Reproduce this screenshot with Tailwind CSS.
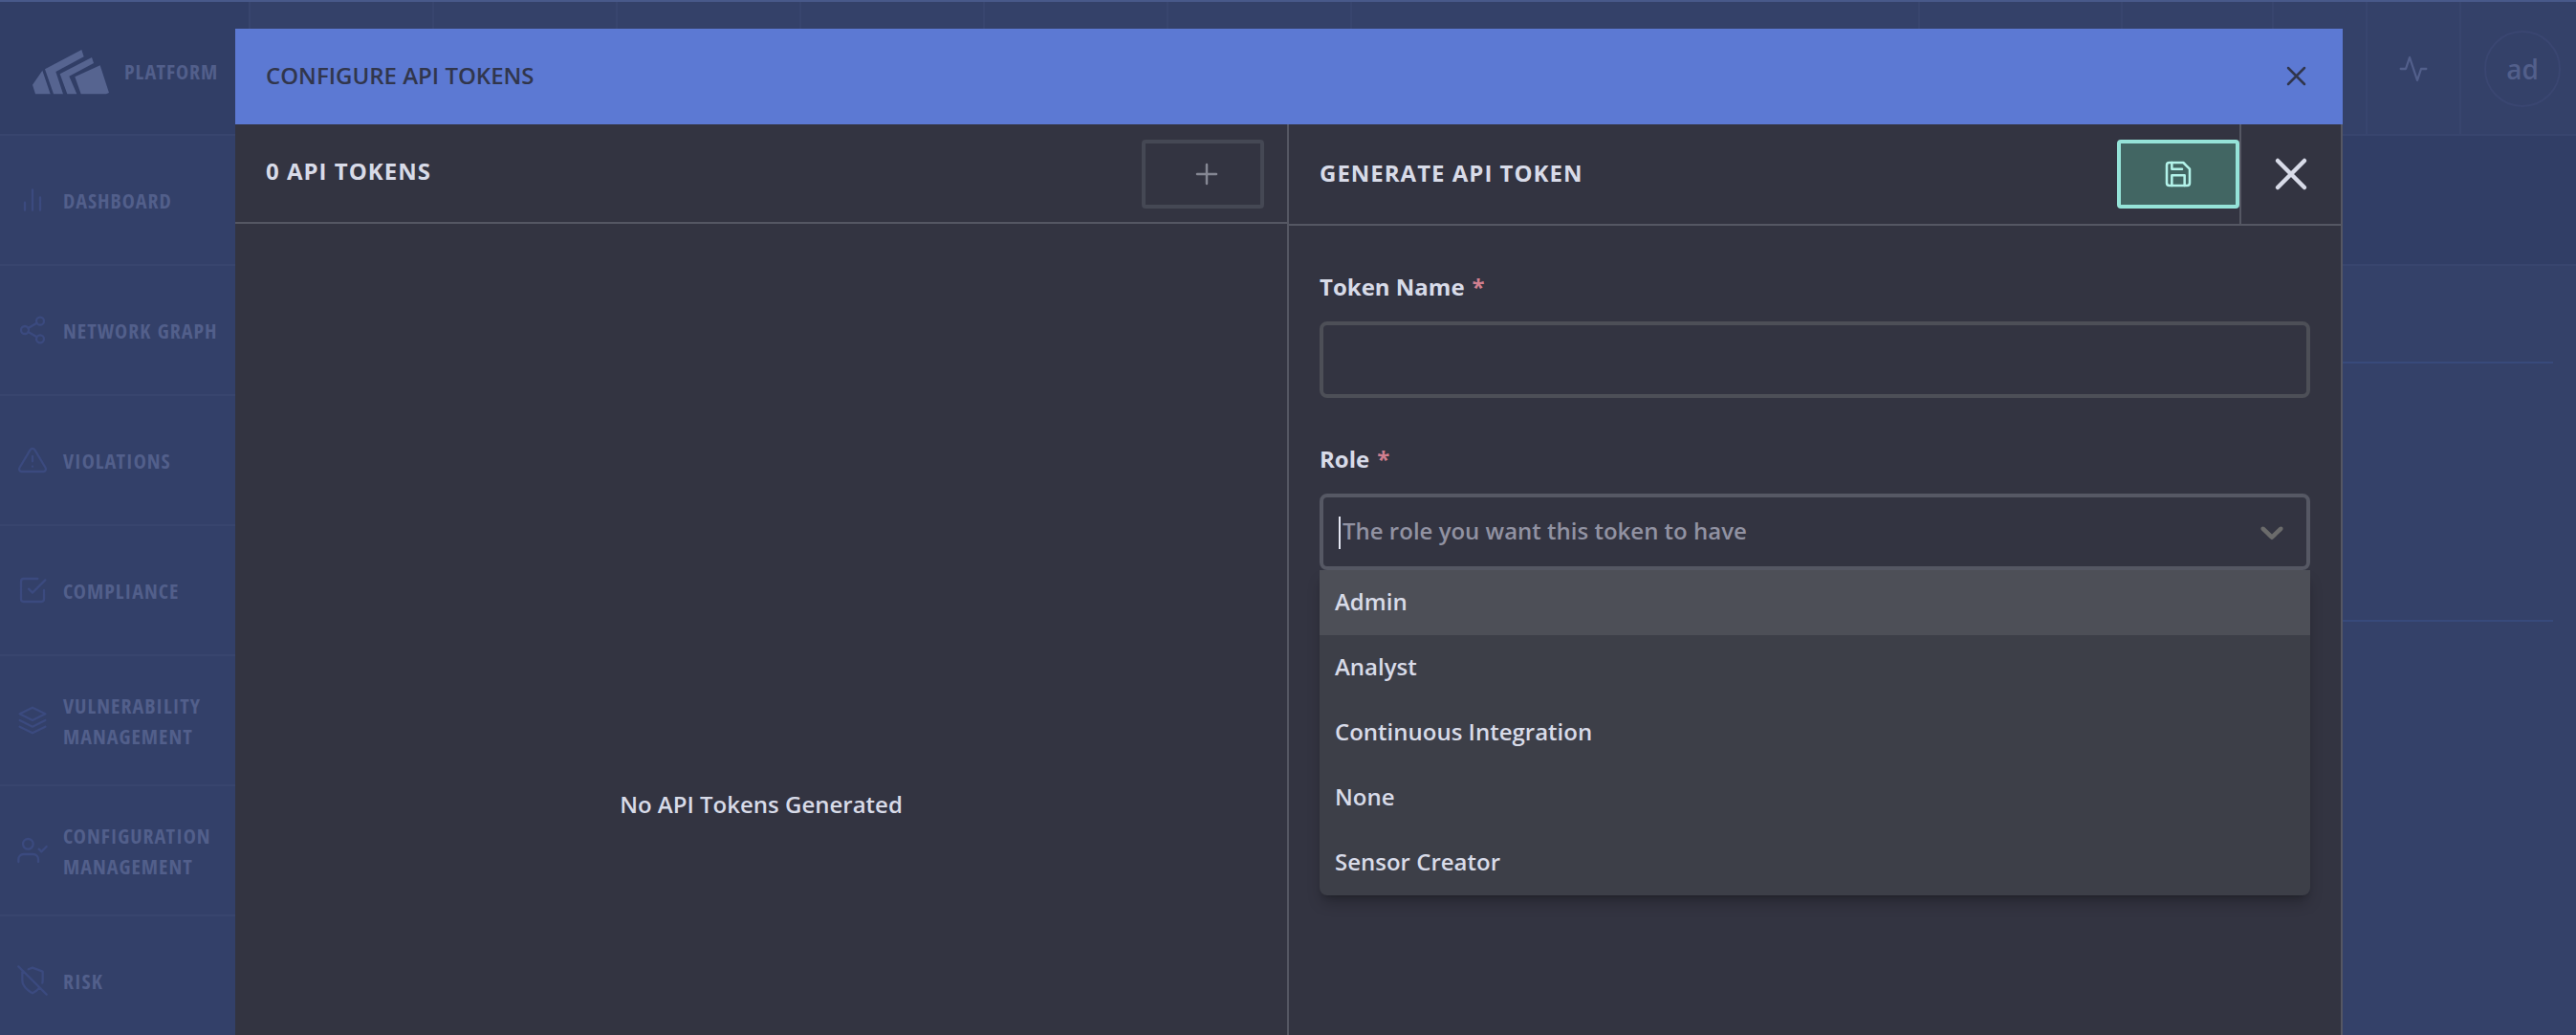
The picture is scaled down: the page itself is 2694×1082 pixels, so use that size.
<!DOCTYPE html>
<html lang="en">
<head>
<meta charset="utf-8">
<title>Configure API Tokens</title>
<script src="https://cdn.jsdelivr.net/npm/@tailwindcss/browser@4"></script>
</head>
<body class="relative h-screen overflow-hidden bg-[#344169] font-['Open_Sans',sans-serif] text-2xl font-semibold text-[#d8dbe8]">

<!-- Dimmed page behind the dialog -->
<div class="flex h-full flex-col border-t-2 border-[#48598a] text-[#525f8b]">
  <header class="flex h-[140px] shrink-0 border-b-2 border-[#38456e]">
    <a href="#" class="flex w-[262px] shrink-0 items-center gap-4 border-r-2 border-[#38456e] bg-[#313e66] pt-2 pl-[34px] font-['Open_Sans_Condensed','Liberation_Sans_Narrow',sans-serif] text-[22px] font-bold tracking-[1px]">
      <svg class="h-[47px] w-20 shrink-0 fill-[#566490]" viewBox="0 0 240 141" aria-hidden="true">
        <path d="M31 65 56 139H9L0 110ZM154 0l7 22L73 69l23 70H66L39 61ZM186 24l6 18L115 83l24 56h-30L86 76ZM212 49l28 86-9 4h-79l-19-54Z"/>
      </svg>
      PLATFORM
    </a>
    <div class="w-48 shrink-0 border-r-2 border-[#38456e]"></div>
    <div class="w-48 shrink-0 border-r-2 border-[#38456e]"></div>
    <div class="w-48 shrink-0 border-r-2 border-[#38456e]"></div>
    <div class="w-48 shrink-0 border-r-2 border-[#38456e]"></div>
    <div class="w-48 shrink-0 border-r-2 border-[#38456e]"></div>
    <div class="w-48 shrink-0 border-r-2 border-[#38456e]"></div>
    <div class="flex-1 border-r-2 border-[#38456e]"></div>
    <div class="w-[212px] border-r-2 border-[#38456e]"></div>
    <div class="w-[158px] border-r-2 border-[#38456e]"></div>
    <div class="w-[98px] border-r-2 border-[#38456e]"></div>
    <button type="button" aria-label="System health" class="flex w-[98px] items-center justify-center border-r-2 border-[#38456e] pt-0.5">
      <svg class="size-8" viewBox="0 0 24 24" fill="none" stroke="currentColor" stroke-width="1.7" stroke-linecap="round" stroke-linejoin="round"><path d="M22 12h-4l-3 9L9 3l-3 9H2"/></svg>
    </button>
    <div class="flex w-[120px] items-center justify-center pt-0.5 pl-2">
      <button type="button" class="size-20 rounded-full border-2 border-[#3a4671] text-[28px] leading-9">ad</button>
    </div>
  </header>

  <div class="flex min-h-0 flex-1">
    <nav class="w-[262px] shrink-0 border-r-2 border-[#38456e] bg-[#334069] font-['Open_Sans_Condensed','Liberation_Sans_Narrow',sans-serif] text-[22px] leading-8 font-bold tracking-[1px]">
      <a href="#" class="flex h-[136px] items-center gap-4 border-b-2 border-[#38456e] pl-[18px]">
        <svg class="size-8 shrink-0 text-[#3b4a7f]" viewBox="0 0 24 24" fill="none" stroke="currentColor" stroke-width="1.7" stroke-linecap="round" stroke-linejoin="round"><path d="M18 20V10M12 20V4M6 20v-6"/></svg>
        <span>DASHBOARD</span>
      </a>
      <a href="#" class="flex h-[136px] items-center gap-4 border-b-2 border-[#38456e] pl-[18px]">
        <svg class="size-8 shrink-0 text-[#3b4a7f]" viewBox="0 0 24 24" fill="none" stroke="currentColor" stroke-width="1.7" stroke-linecap="round" stroke-linejoin="round"><circle cx="18" cy="5" r="3"/><circle cx="6" cy="12" r="3"/><circle cx="18" cy="19" r="3"/><path d="m8.600 13.500 6.800 4M15.400 6.500l-6.800 4"/></svg>
        <span>NETWORK GRAPH</span>
      </a>
      <a href="#" class="flex h-[136px] items-center gap-4 border-b-2 border-[#38456e] pl-[18px]">
        <svg class="size-8 shrink-0 text-[#3b4a7f]" viewBox="0 0 24 24" fill="none" stroke="currentColor" stroke-width="1.7" stroke-linecap="round" stroke-linejoin="round"><path d="M10.300 3.900 1.800 18a2 2 0 0 0 1.700 3h17a2 2 0 0 0 1.700-3L13.700 3.900a2 2 0 0 0-3.400 0zM12 9v4M12 17h.01"/></svg>
        <span>VIOLATIONS</span>
      </a>
      <a href="#" class="flex h-[136px] items-center gap-4 border-b-2 border-[#38456e] pl-[18px]">
        <svg class="size-8 shrink-0 text-[#3b4a7f]" viewBox="0 0 24 24" fill="none" stroke="currentColor" stroke-width="1.7" stroke-linecap="round" stroke-linejoin="round"><path d="m9 11 3 3L22 4M21 12v7a2 2 0 0 1-2 2H5a2 2 0 0 1-2-2V5a2 2 0 0 1 2-2h11"/></svg>
        <span>COMPLIANCE</span>
      </a>
      <a href="#" class="flex h-[136px] items-center gap-4 border-b-2 border-[#38456e] pl-[18px]">
        <svg class="size-8 shrink-0 text-[#3b4a7f]" viewBox="0 0 24 24" fill="none" stroke="currentColor" stroke-width="1.7" stroke-linecap="round" stroke-linejoin="round"><path d="M12 2 2 7l10 5 10-5zM2 17l10 5 10-5M2 12l10 5 10-5"/></svg>
        <span>VULNERABILITY<br>MANAGEMENT</span>
      </a>
      <a href="#" class="flex h-[136px] items-center gap-4 border-b-2 border-[#38456e] pl-[18px]">
        <svg class="size-8 shrink-0 text-[#3b4a7f]" viewBox="0 0 24 24" fill="none" stroke="currentColor" stroke-width="1.7" stroke-linecap="round" stroke-linejoin="round"><path d="M16.500 21v-2a4 4 0 0 0-4-4H5a4 4 0 0 0-4 4v2M17 11l2 2 4-4"/><circle cx="8.500" cy="7" r="4"/></svg>
        <span>CONFIGURATION<br>MANAGEMENT</span>
      </a>
      <a href="#" class="flex h-[136px] items-center gap-4 border-b-2 border-[#38456e] pl-[18px]">
        <svg class="size-8 shrink-0 text-[#3b4a7f]" viewBox="0 0 24 24" fill="none" stroke="currentColor" stroke-width="1.7" stroke-linecap="round" stroke-linejoin="round"><path d="M19.700 14a6.900 6.900 0 0 0 .3-2V5l-8-3-3.200 1.200M4.700 4.700 4 5v7c0 6 8 10 8 10a20.300 20.300 0 0 0 5.600-4.400M1 1l22 22"/></svg>
        <span>RISK</span>
      </a>
    </nav>
    <main class="flex-1">
      <div class="h-[136px] border-b-2 border-[#38456e] bg-[#313e66]"></div>
      <div class="mr-6 h-[102px] border-b-2 border-[#384a7b]"></div>
      <div class="mr-6 h-[270px] border-b-2 border-[#384a7b]"></div>
    </main>
  </div>
</div>

<!-- Dialog -->
<section role="dialog" aria-modal="true" aria-labelledby="dialog-title" class="absolute top-[30px] right-[244px] bottom-0 left-[246px] flex flex-col bg-[#333441]">
  <header class="flex h-[100px] shrink-0 items-center justify-between bg-[#5c79d3] px-8 text-[#31364c]">
    <h1 id="dialog-title" class="pb-0.5">CONFIGURE API TOKENS</h1>
    <button type="button" aria-label="Close dialog">
      <svg class="size-8" viewBox="0 0 32 32" fill="none" stroke="currentColor" stroke-width="2.500" stroke-linecap="round"><path d="m7 7 17 17M24 7 7 24"/></svg>
    </button>
  </header>
  <div class="grid min-h-0 flex-1 grid-cols-2">
    <section class="flex flex-col border-r-2 border-[#555763]">
      <header class="flex h-[104px] shrink-0 justify-between border-b-2 border-[#555763] pt-4 pr-6 pl-8">
        <h2 class="leading-[66px] font-bold tracking-[1px]">0 API TOKENS</h2>
        <button type="button" aria-label="Generate token" class="flex h-[72px] w-32 items-center justify-center rounded-sm border-4 border-[#454854] pl-2 text-[#858793]">
          <svg class="size-8" viewBox="0 0 32 32" fill="none" stroke="currentColor" stroke-width="2.500" stroke-linecap="round"><path d="M16 6v20M6 16h20"/></svg>
        </button>
      </header>
      <p class="flex flex-1 items-center justify-center pt-[366px]">No API Tokens Generated</p>
    </section>
    <section class="border-r-2 border-[#555763]">
      <header class="flex h-[106px] border-b-2 border-[#555763] pl-8">
        <h2 class="flex-1 leading-[102px] font-bold tracking-[1px]">GENERATE API TOKEN</h2>
        <div class="flex items-center border-r-2 border-[#555763]">
          <button type="submit" form="token-form" aria-label="Save" class="flex h-[72px] w-32 items-center justify-center rounded-sm border-4 border-[#95e3d8] bg-[#426663] text-[#b3f3ea]">
            <svg class="size-8" viewBox="0 0 24 24" fill="none" stroke="currentColor" stroke-width="1.900" stroke-linecap="round" stroke-linejoin="round"><path d="M19 21H5a2 2 0 0 1-2-2V5a2 2 0 0 1 2-2h11l5 5v11a2 2 0 0 1-2 2z"/><path d="M17 21v-8H7v8M7 3v5h8"/></svg>
          </button>
        </div>
        <button type="button" aria-label="Close panel" class="flex w-[104px] items-center justify-center">
          <svg class="size-10" viewBox="0 0 40 40" fill="none" stroke="currentColor" stroke-width="4.500" stroke-linecap="round"><path d="m6 6 28 28M34 6 6 34"/></svg>
        </button>
      </header>
      <form id="token-form" class="px-8 pt-[46px]">
        <label for="token-name" class="flex gap-2 leading-9 font-bold">Token Name <span class="text-[#d07f8f]" aria-hidden="true">*</span></label>
        <input id="token-name" type="text" class="mt-[18px] block h-20 w-full rounded-lg border-4 border-[#4d4f57] px-4 outline-none">
        <label for="token-role" class="mt-[46px] flex gap-2 leading-9 font-bold">Role <span class="text-[#d07f8f]" aria-hidden="true">*</span></label>
        <div class="relative mt-[18px]">
          <input id="token-role" type="text" role="combobox" aria-expanded="true" aria-controls="role-options" placeholder="The role you want this token to have" class="block h-20 w-full rounded-lg border-4 border-[#565864] pr-16 pb-1 pl-5 outline-none placeholder:text-[#9192a2]">
          <span class="absolute top-6 left-5 h-[34px] w-0.5 bg-[#e4e6f2]"></span>
          <svg class="absolute top-5 right-5 size-10 text-[#6b6b6b]" viewBox="0 0 20 20" fill="currentColor" aria-hidden="true"><path d="M4.516 7.548c.436-.446 1.043-.481 1.576 0L10 11.295l3.908-3.747c.533-.481 1.141-.446 1.574 0 .436.445.408 1.197 0 1.615-.406.418-4.695 4.502-4.695 4.502a1.095 1.095 0 0 1-1.576 0S4.924 9.581 4.516 9.163c-.409-.418-.436-1.170 0-1.615z"/></svg>
          <ul id="role-options" role="listbox" aria-label="Role" class="absolute inset-x-0 top-full overflow-hidden rounded-b-lg bg-[#3d3f48] leading-[66px] shadow-lg shadow-black/25">
            <li role="option" aria-selected="true" class="bg-[#4d4f57] px-4 pb-0.5">Admin</li>
            <li role="option" aria-selected="false" class="px-4 pb-0.5">Analyst</li>
            <li role="option" aria-selected="false" class="px-4 pb-0.5">Continuous Integration</li>
            <li role="option" aria-selected="false" class="px-4 pb-0.5">None</li>
            <li role="option" aria-selected="false" class="px-4 pb-0.5">Sensor Creator</li>
          </ul>
        </div>
      </form>
    </section>
  </div>
</section>
</body>
</html>
